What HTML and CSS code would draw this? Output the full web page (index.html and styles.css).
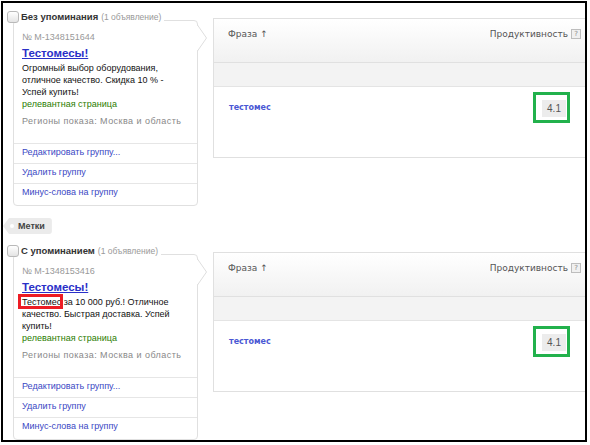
FILE: index.html
```html
<!DOCTYPE html>
<html lang="ru">
<head>
<meta charset="utf-8">
<title>Группы объявлений</title>
<link rel="stylesheet" href="styles.css">
</head>
<body>
<div class="frame">
  <section class="group">
    <div class="left">
      <div class="group-head"><span class="checkbox"></span><b class="group-title">Без упоминания</b><span class="group-count">(1 объявление)</span></div>
      <div class="card">
        <svg class="pointer" width="10" height="26" viewBox="0 0 10 26"><rect x="0" y="1" width="1.5" height="24" fill="#fff"/><path d="M0.5 0 L9.5 13 L0.5 26" fill="#fff" stroke="#dedede" stroke-width="1"/></svg>
        <div class="ad">
          <div class="ad-num">№ M-1348151644</div>
          <a class="ad-title" href="#">Тестомесы!</a>
          <p class="ad-text">Огромный выбор оборудования,<br>отличное качество. Скидка 10 % -<br>Успей купить!</p>
          <div class="ad-rel">релевантная страница</div>
          <div class="ad-reg">Регионы показа: Москва и область</div>
        </div>
        <ul class="card-links">
          <li><a href="#">Редактировать группу...</a></li>
          <li><a href="#">Удалить группу</a></li>
          <li><a href="#">Минус-слова на группу</a></li>
        </ul>
      </div>
    </div>
    <div class="panel">
      <div class="panel-head"><span class="col-phrase">Фраза ↑</span><span class="col-prod">Продуктивность<span class="help">?</span></span></div>
      <div class="panel-band"></div>
      <div class="panel-body"><a class="phrase" href="#">тестомес</a><span class="hl"><span class="score">4.1</span></span></div>
    </div>
  </section>

  <div class="tags"><span class="tag">Метки</span></div>

  <section class="group">
    <div class="left">
      <div class="group-head"><span class="checkbox"></span><b class="group-title">С упоминанием</b><span class="group-count">(1 объявление)</span></div>
      <div class="card">
        <svg class="pointer" width="10" height="26" viewBox="0 0 10 26"><rect x="0" y="1" width="1.5" height="24" fill="#fff"/><path d="M0.5 0 L9.5 13 L0.5 26" fill="#fff" stroke="#dedede" stroke-width="1"/></svg>
        <div class="ad">
          <div class="ad-num">№ M-1348153416</div>
          <a class="ad-title" href="#">Тестомесы!</a>
          <p class="ad-text"><span class="mark">Тестомес</span> за 10 000 руб.! Отличное<br>качество. Быстрая доставка. Успей<br>купить!</p>
          <div class="ad-rel">релевантная страница</div>
          <div class="ad-reg">Регионы показа: Москва и область</div>
        </div>
        <ul class="card-links">
          <li><a href="#">Редактировать группу...</a></li>
          <li><a href="#">Удалить группу</a></li>
          <li><a href="#">Минус-слова на группу</a></li>
        </ul>
      </div>
    </div>
    <div class="panel">
      <div class="panel-head"><span class="col-phrase">Фраза ↑</span><span class="col-prod">Продуктивность<span class="help">?</span></span></div>
      <div class="panel-band"></div>
      <div class="panel-body"><a class="phrase" href="#">тестомес</a><span class="hl"><span class="score">4.1</span></span></div>
    </div>
  </section>
</div>
</body>
</html>
```

FILE: styles.css
```css
* { box-sizing: border-box; }

body {
  margin: 0;
  background: #fff;
  font-family: "Liberation Sans", Arial, sans-serif;
}

.frame {
  margin: 1px 0 0 1px;
  width: 586px;
  height: 441px;
  border: 2px solid #000;
  overflow: hidden;
  padding-top: 8px;
}

.group {
  display: flex;
  align-items: flex-start;
}

.left {
  width: 196px;
  flex: none;
}

.group-head {
  position: relative;
  z-index: 1;
  display: flex;
  align-items: center;
  width: fit-content;
  height: 12px;
  margin-left: 4px;
  padding-right: 3px;
  background: #fff;
  line-height: 12px;
}

.checkbox {
  flex: none;
  width: 12px;
  height: 12px;
  margin-right: 2px;
  border: 1px solid #b9b9b9;
  border-radius: 3px;
  background: linear-gradient(#fff, #e4e4e4);
}

.group-title {
  font-size: 9.5px;
  font-weight: bold;
  color: #333;
}

.group-count {
  margin-left: 3px;
  font-size: 8.5px;
  color: #999;
}

.card {
  position: relative;
  width: 185px;
  margin: -3px 0 0 10px;
  border: 1px solid #e0e0e0;
  border-radius: 4px;
  background: #fff;
}

.pointer {
  position: absolute;
  top: 4px;
  right: -10px;
  display: block;
}

.ad {
  padding: 10px 8px 16px;
}

.ad-num {
  font-size: 9px;
  line-height: 12px;
  color: #999;
}

.ad-title {
  display: block;
  width: fit-content;
  margin-top: 2px;
  font-size: 11.5px;
  font-weight: bold;
  line-height: 16px;
  color: #2a30c8;
  text-decoration: underline;
}

.ad-text {
  margin: 1px 0 0;
  font-size: 9px;
  line-height: 12px;
  color: #111;
}

.mark {
  position: relative;
}

.mark::after {
  content: "";
  position: absolute;
  left: -4px;
  right: -2px;
  top: -3px;
  bottom: -2px;
  border: 3px solid #ed1c24;
}

.ad-rel {
  font-size: 9px;
  line-height: 12px;
  color: #2a7d00;
}

.ad-reg {
  margin-top: 5px;
  font-size: 9px;
  line-height: 12px;
  color: #888;
  letter-spacing: 0.45px;
}

.card-links {
  list-style: none;
  margin: 0;
  padding: 0 0 2px;
}

.card-links li {
  height: 20px;
  padding-left: 8px;
  border-top: 1px solid #e6e6e6;
  font-size: 9px;
  line-height: 17px;
}

.card-links a {
  color: #3a48c4;
  text-decoration: none;
}

.panel {
  flex: 1;
  margin: 7px 0 0 14px;
  border: 1px solid #e0e0e0;
  border-right: 0;
}

.panel-head {
  display: flex;
  justify-content: space-between;
  align-items: flex-start;
  height: 44px;
  padding: 9px 4px 0 14px;
  border-bottom: 1px solid #e0e0e0;
  background: linear-gradient(#fff, #f1f1f1);
  font-family: "DejaVu Sans", Verdana, sans-serif;
  font-size: 9px;
  line-height: 12px;
  color: #555;
}

.col-prod {
  display: flex;
  align-items: center;
}

.help {
  display: inline-block;
  width: 10px;
  height: 10px;
  margin-left: 3px;
  border: 1px solid #bdbdbd;
  background: #f0f0f0;
  font-size: 7px;
  line-height: 8px;
  text-align: center;
  color: #888;
}

.panel-band {
  height: 24px;
  border-bottom: 1px solid #e4e4e4;
  background: #f3f3f3;
}

.panel-body {
  display: flex;
  justify-content: space-between;
  align-items: flex-start;
  height: 70px;
  padding: 5px 15px 0 15px;
}

.phrase {
  margin-top: 10px;
  font-family: "DejaVu Sans", Verdana, sans-serif;
  font-size: 8px;
  font-weight: bold;
  line-height: 12px;
  color: #4a58d4;
  text-decoration: none;
}

.hl {
  display: block;
  padding: 5px 1px 3px 6px;
  border: 3px solid #22b14c;
}

.score {
  display: block;
  width: 24px;
  height: 17px;
  background: #ececec;
  font-size: 10px;
  line-height: 17px;
  text-align: center;
  color: #555;
}

.tags {
  height: 16px;
  margin: 9px 0 14px;
}

.tag {
  position: relative;
  display: inline-block;
  height: 16px;
  padding: 0 7px 0 15px;
  background: #ebebeb;
  border-radius: 0 3px 3px 0;
  clip-path: polygon(6px 0, 100% 0, 100% 100%, 6px 100%, 0 50%);
  font-size: 9px;
  font-weight: bold;
  line-height: 16px;
  color: #444;
}

.tag::before {
  content: "";
  position: absolute;
  left: 7px;
  top: 6px;
  width: 4px;
  height: 4px;
  border-radius: 50%;
  background: #fff;
}
```
